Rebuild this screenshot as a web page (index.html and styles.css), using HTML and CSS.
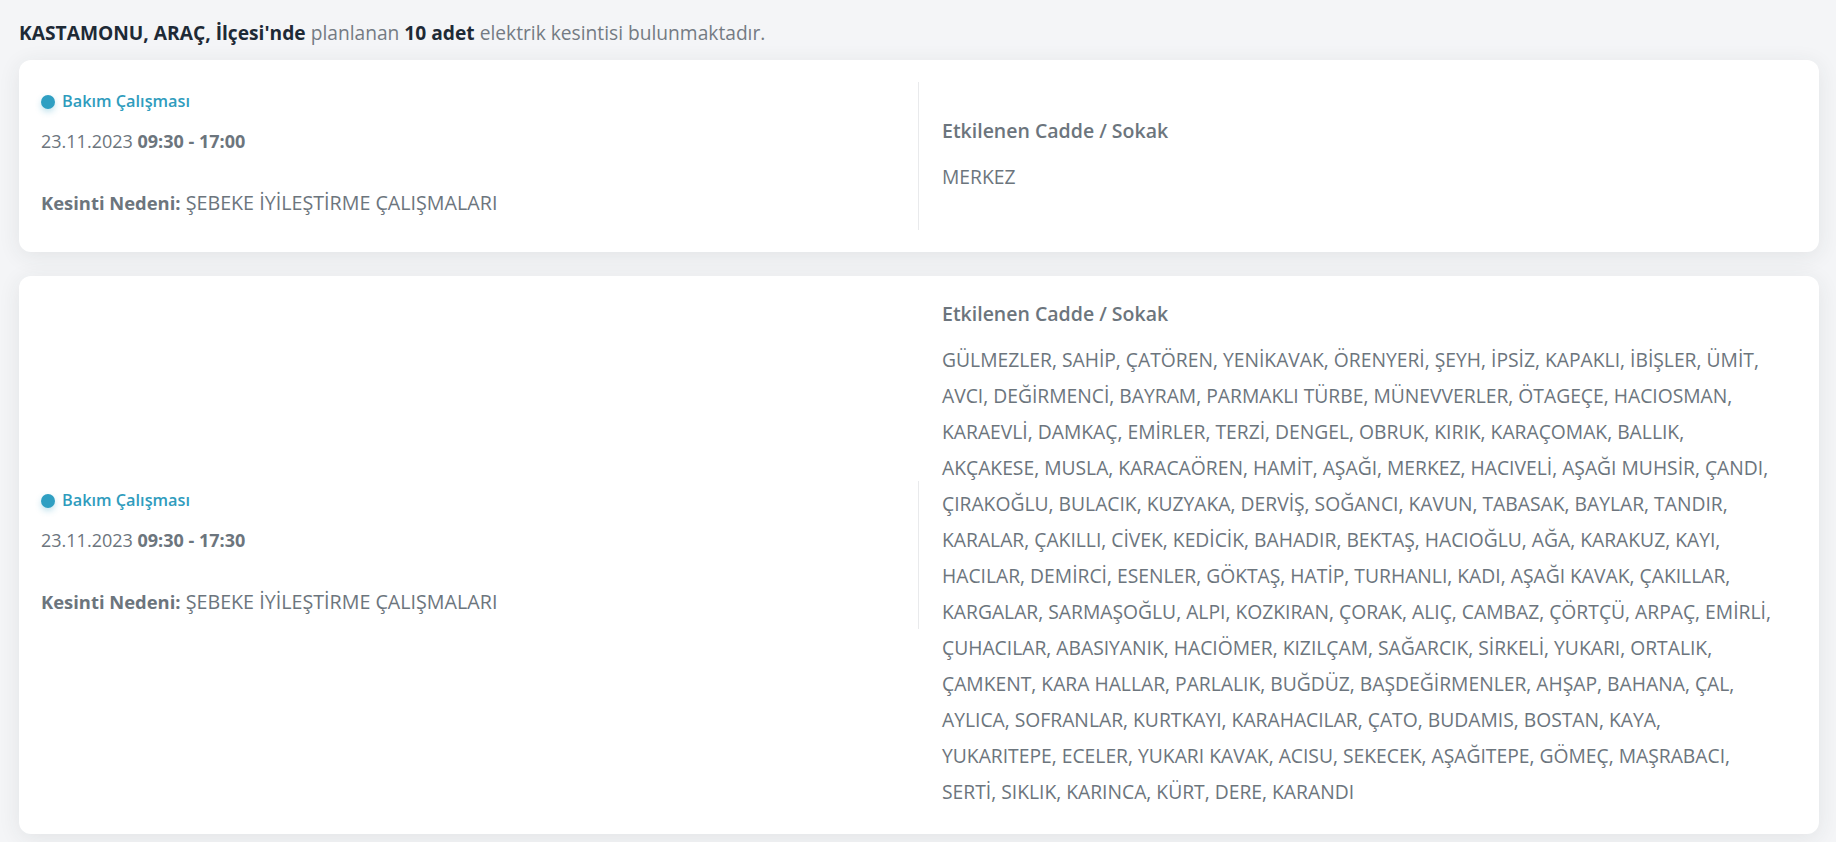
FILE: index.html
```html
<!DOCTYPE html>
<html lang="tr">
<head>
    <meta charset="UTF-8">
    <meta name="viewport" content="width=device-width, initial-scale=1.0">
    <title>Planlı Elektrik Kesintileri</title>
    <link rel="stylesheet" href="styles.css">
</head>
<body>
    <div class="page">
        <p class="summary"><strong>KASTAMONU, ARAÇ, İlçesi'nde</strong> planlanan <strong>10 adet</strong> elektrik kesintisi bulunmaktadır.</p>

        <div class="outage">
            <div class="outage-info">
                <div class="outage-type"><span class="dot"></span>Bakım Çalışması</div>
                <div class="outage-date">23.11.2023 <b>09:30 - 17:00</b></div>
                <div class="outage-reason"><b>Kesinti Nedeni:</b> ŞEBEKE İYİLEŞTİRME ÇALIŞMALARI</div>
            </div>
            <div class="outage-streets">
                <h4>Etkilenen Cadde / Sokak</h4>
                <p>MERKEZ</p>
            </div>
        </div>

        <div class="outage">
            <div class="outage-info">
                <div class="outage-type"><span class="dot"></span>Bakım Çalışması</div>
                <div class="outage-date">23.11.2023 <b>09:30 - 17:30</b></div>
                <div class="outage-reason"><b>Kesinti Nedeni:</b> ŞEBEKE İYİLEŞTİRME ÇALIŞMALARI</div>
            </div>
            <div class="outage-streets">
                <h4>Etkilenen Cadde / Sokak</h4>
                <p>GÜLMEZLER, SAHİP, ÇATÖREN, YENİKAVAK, ÖRENYERİ, ŞEYH, İPSİZ, KAPAKLI, İBİŞLER, ÜMİT,<br>
                AVCI, DEĞİRMENCİ, BAYRAM, PARMAKLI TÜRBE, MÜNEVVERLER, ÖTAGEÇE, HACIOSMAN,<br>
                KARAEVLİ, DAMKAÇ, EMİRLER, TERZİ, DENGEL, OBRUK, KIRIK, KARAÇOMAK, BALLIK,<br>
                AKÇAKESE, MUSLA, KARACAÖREN, HAMİT, AŞAĞI, MERKEZ, HACIVELİ, AŞAĞI MUHSİR, ÇANDI,<br>
                ÇIRAKOĞLU, BULACIK, KUZYAKA, DERVİŞ, SOĞANCI, KAVUN, TABASAK, BAYLAR, TANDIR,<br>
                KARALAR, ÇAKILLI, CİVEK, KEDİCİK, BAHADIR, BEKTAŞ, HACIOĞLU, AĞA, KARAKUZ, KAYI,<br>
                HACILAR, DEMİRCİ, ESENLER, GÖKTAŞ, HATİP, TURHANLI, KADI, AŞAĞI KAVAK, ÇAKILLAR,<br>
                KARGALAR, SARMAŞOĞLU, ALPI, KOZKIRAN, ÇORAK, ALIÇ, CAMBAZ, ÇÖRTÇÜ, ARPAÇ, EMİRLİ,<br>
                ÇUHACILAR, ABASIYANIK, HACIÖMER, KIZILÇAM, SAĞARCIK, SİRKELİ, YUKARI, ORTALIK,<br>
                ÇAMKENT, KARA HALLAR, PARLALIK, BUĞDÜZ, BAŞDEĞİRMENLER, AHŞAP, BAHANA, ÇAL,<br>
                AYLICA, SOFRANLAR, KURTKAYI, KARAHACILAR, ÇATO, BUDAMIS, BOSTAN, KAYA,<br>
                YUKARITEPE, ECELER, YUKARI KAVAK, ACISU, SEKECEK, AŞAĞITEPE, GÖMEÇ, MAŞRABACI,<br>
                SERTİ, SIKLIK, KARINCA, KÜRT, DERE, KARANDI</p>
            </div>
        </div>
    </div>
</body>
</html>
```

FILE: styles.css
```css
body {
    margin: 0;
    background-color: #f4f5f7;
    font-family: "Open Sans", "Noto Sans", sans-serif;
    color: #6c757d;
}
.page {
    padding: 20px 17px 8px 19px;
}
.summary {
    margin: 0 0 14px;
    font-size: 19.2px;
    line-height: 26px;
    color: #747b83;
}
.summary strong {
    font-weight: 700;
    color: #1e2a36;
}
.outage {
    display: grid;
    grid-template-columns: 1fr 1fr;
    align-items: center;
    padding: 22px 0;
    margin-bottom: 24px;
    background-color: #fff;
    border-radius: 12px;
    box-shadow: 0 4px 22px rgba(40, 50, 60, 0.09);
}
.outage-info {
    height: 148px;
    box-sizing: border-box;
    padding: 6px 22px 0 22px;
    border-right: 1px solid #e9eaec;
}
.outage-type {
    display: flex;
    align-items: center;
    font-size: 16.3px;
    line-height: 26px;
    font-weight: 600;
    color: #2f9cbd;
}
.dot {
    width: 14px;
    height: 14px;
    margin: 2px 7px 0 0;
    border-radius: 50%;
    background-color: #2f9fc2;
    box-shadow: 0 3px 6px rgba(47, 159, 194, 0.3);
}
.outage-date {
    margin-top: 14px;
    font-size: 18px;
    line-height: 26px;
}
.outage-reason {
    margin-top: 36px;
    font-size: 19.7px;
    line-height: 26px;
}
.outage-reason b {
    font-size: 18.4px;
}
.outage-date b,
.outage-reason b {
    font-weight: 700;
}
.outage-streets {
    padding: 1px 24px 2px 23px;
}
.outage-streets h4 {
    margin: 0 0 13px;
    font-size: 19.5px;
    line-height: 30px;
    font-weight: 600;
}
.outage-streets p {
    margin: 0;
    font-size: 19.3px;
    line-height: 36px;
}
```
